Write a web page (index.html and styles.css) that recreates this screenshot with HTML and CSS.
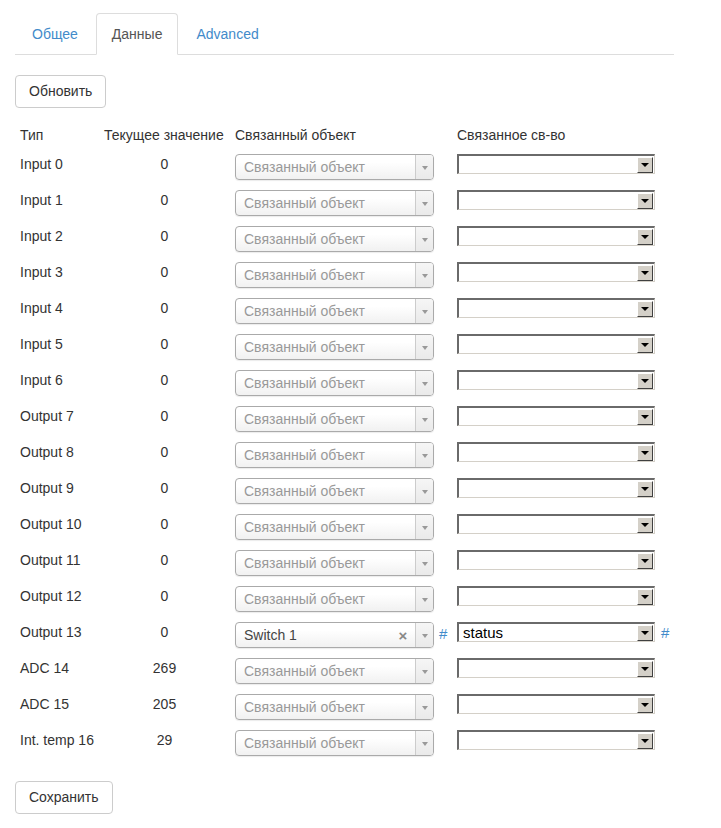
FILE: index.html
```html
<!DOCTYPE html>
<html lang="ru">
<head>
<meta charset="utf-8">
<title>Данные</title>
<link rel="stylesheet" href="styles.css">
</head>
<body>
<div class="page">
  <ul class="tabs">
    <li class="tab"><a href="#">Общее</a></li>
    <li class="tab active"><a href="#">Данные</a></li>
    <li class="tab"><a href="#">Advanced</a></li>
  </ul>

  <button class="btn">Обновить</button>

  <table class="grid">
    <colgroup>
      <col class="c1"><col class="c2"><col class="c3"><col class="c4">
    </colgroup>
    <thead>
      <tr><th>Тип</th><th class="val">Текущее значение</th><th>Связанный объект</th><th>Связанное св-во</th></tr>
    </thead>
    <tbody id="rows"></tbody>
  </table>

  <button class="btn save">Сохранить</button>
</div>
<script src="app.js"></script>
</body>
</html>
```

FILE: app.js
```js
var data = [
  ["Input 0","0"],["Input 1","0"],["Input 2","0"],["Input 3","0"],["Input 4","0"],
  ["Input 5","0"],["Input 6","0"],["Output 7","0"],["Output 8","0"],["Output 9","0"],
  ["Output 10","0"],["Output 11","0"],["Output 12","0"],["Output 13","0","Switch 1","status"],
  ["ADC 14","269"],["ADC 15","205"],["Int. temp 16","29"]
];
var tb = document.getElementById("rows");
data.forEach(function (d) {
  var tr = document.createElement("tr");
  var obj = d[2]
    ? '<span class="chosen"><span class="ch-text sel">' + d[2] + '</span><span class="ch-x">×</span><span class="ch-arrow"><i></i></span></span><a class="hash" href="#">#</a>'
    : '<span class="chosen"><span class="ch-text">Связанный объект</span><span class="ch-arrow"><i></i></span></span>';
  var prop = '<span class="native"><span class="nv-text">' + (d[3] || '') + '</span><span class="nv-btn"><i></i></span></span>' + (d[3] ? '<a class="hash" href="#">#</a>' : '');
  tr.innerHTML = '<td>' + d[0] + '</td><td class="val">' + d[1] + '</td><td>' + obj + '</td><td>' + prop + '</td>';
  tb.appendChild(tr);
});
```

FILE: styles.css
```css
html, body {
  margin: 0;
  padding: 0;
  background: #fff;
}
body {
  font-family: "Liberation Sans", Arial, Helvetica, sans-serif;
  font-size: 14px;
  line-height: 20px;
  color: #333;
}
.page {
  width: 659px;
  margin-left: 15px;
  padding-top: 13px;
}
.tabs {
  list-style: none;
  margin: 0;
  padding: 0;
  display: flex;
  border-bottom: 1px solid #ddd;
}
.tab {
  margin-bottom: -1px;
  margin-right: 2px;
}
.tab a {
  display: block;
  padding: 10px 15px;
  line-height: 20px;
  border: 1px solid transparent;
  border-radius: 4px 4px 0 0;
  color: #428bca;
  text-decoration: none;
}
.tab:first-child a {
  padding-left: 16px;
}
.tab.active a {
  color: #555;
  background: #fff;
  border-color: #ddd #ddd transparent #ddd;
}
.btn {
  display: block;
  margin-top: 20px;
  font-family: inherit;
  font-size: 14px;
  line-height: 19px;
  padding: 6px 13px;
  color: #333;
  background: #fff;
  border: 1px solid #ccc;
  border-radius: 4px;
}
.btn.save {
  margin-top: 20px;
}
.grid {
  margin-top: 11px;
  border-collapse: collapse;
  table-layout: fixed;
  width: 659px;
}
.c1 { width: 84px; }
.c2 { width: 131px; }
.c3 { width: 222px; }
.c4 { width: 222px; }
.grid th {
  font-weight: normal;
  text-align: left;
  padding: 6px 5px 4px;
  white-space: nowrap;
  line-height: 20px;
}
.grid td {
  padding: 5px 5px 4px;
  vertical-align: top;
  white-space: nowrap;
  height: 27px;
  box-sizing: content-box;
}
.grid td.val {
  text-align: center;
}
.chosen {
  display: inline-flex;
  align-items: stretch;
  vertical-align: top;
  margin-top: 0;
  width: 199px;
  height: 26px;
  box-sizing: border-box;
  border: 1px solid #aaa;
  border-radius: 4px;
  background: linear-gradient(#fff 30%, #f1f1f1 100%);
  box-shadow: 0 1px 1px rgba(0,0,0,.08);
  overflow: hidden;
}
.ch-text {
  flex: 1;
  padding-left: 8px;
  line-height: 25px;
  color: #999;
  text-align: left;
}
.ch-text.sel {
  color: #444;
}
.ch-x {
  width: 16px;
  line-height: 26px;
  font-size: 15px;
  font-weight: bold;
  color: #888;
  text-align: center;
  margin-right: 4px;
}
.ch-arrow {
  width: 17px;
  border-left: 1px solid #ccc;
  display: flex;
  align-items: center;
  justify-content: center;
  background: linear-gradient(#f6f6f6, #eaeaea);
}
.ch-arrow i {
  display: block;
  width: 0;
  height: 0;
  margin-top: 2px;
  border-left: 3px solid transparent;
  border-right: 3px solid transparent;
  border-top: 4px solid #999;
}
.hash {
  color: #428bca;
  text-decoration: none;
  margin-left: 5px;
  vertical-align: top;
  line-height: 24px;
  font-size: 15px;
}
td:last-child .hash {
  margin-left: 6px;
  line-height: 22px;
}
.native {
  display: inline-flex;
  vertical-align: top;
  width: 198px;
  height: 20px;
  box-sizing: border-box;
  border-top: 2px solid #6a6a6a;
  border-left: 2px solid #6a6a6a;
  border-right: 1px solid #d4d0c8;
  border-bottom: 1px solid #d4d0c8;
  background: #fff;
  align-items: center;
}
.nv-text {
  flex: 1;
  padding-left: 4px;
  color: #000;
  line-height: 17px;
  font-size: 15px;
  text-align: left;
}
.nv-btn {
  width: 16px;
  height: 16px;
  margin-right: 1px;
  box-sizing: border-box;
  background: #d4d0c8;
  border-top: 1px solid #fff;
  border-left: 1px solid #fff;
  border-right: 1px solid #404040;
  border-bottom: 1px solid #404040;
  display: flex;
  align-items: center;
  justify-content: center;
}
.nv-btn i {
  display: block;
  width: 0;
  height: 0;
  border-left: 4px solid transparent;
  border-right: 4px solid transparent;
  border-top: 4px solid #000;
}
```
